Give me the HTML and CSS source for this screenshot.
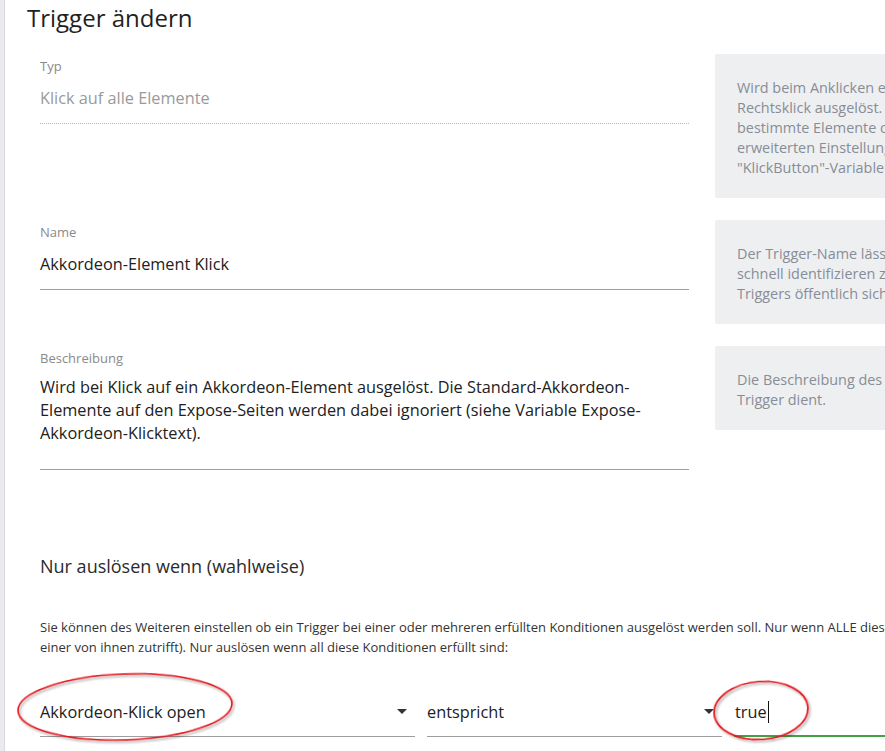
FILE: index.html
```html
<!DOCTYPE html>
<html lang="de">
<head>
<meta charset="utf-8">
<title>Trigger ändern</title>
<link rel="stylesheet" href="styles.css">
</head>
<body>
<div class="app">
  <aside class="strip"></aside>
  <main class="page">
    <h1 class="title">Trigger ändern</h1>
    <div class="form-grid">
      <div class="field">
        <div class="label">Typ</div>
        <div class="value value-disabled">Klick auf alle Elemente</div>
      </div>
      <div class="hint">Wird beim Anklicken eines beliebigen Elements mit der linken Maustaste oder per<br>Rechtsklick ausgelöst. Auf Wunsch kann der Trigger auf<br>bestimmte Elemente oder Klickarten beschränkt werden (siehe<br>erweiterten Einstellungen). Die gedrückte Taste steht in der<br>"KlickButton"-Variable zur Verfügung.</div>

      <div class="field">
        <div class="label">Name</div>
        <div class="value">Akkordeon-Element Klick</div>
      </div>
      <div class="hint">Der Trigger-Name lässt sich frei wählen, um den Trigger<br>schnell identifizieren zu können. Er ist für Besucher des<br>Triggers öffentlich sichtbar.</div>

      <div class="field">
        <div class="label">Beschreibung</div>
        <div class="value value-desc">Wird bei Klick auf ein Akkordeon-Element ausgelöst. Die Standard-Akkordeon-<br>Elemente auf den Expose-Seiten werden dabei ignoriert (siehe Variable Expose-<br>Akkordeon-Klicktext).</div>
      </div>
      <div class="hint">Die Beschreibung des Triggers erklärt, wofür dieser<br>Trigger dient.</div>
    </div>

    <section class="conditions">
      <h2 class="cond-title">Nur auslösen wenn (wahlweise)</h2>
      <p class="cond-text">Sie können des Weiteren einstellen ob ein Trigger bei einer oder mehreren erfüllten Konditionen ausgelöst werden soll. Nur wenn ALLE diese Konditionen zutreffen (oder wenn mindestens<br>einer von ihnen zutrifft). Nur auslösen wenn all diese Konditionen erfüllt sind:</p>
      <div class="cond-row">
        <div class="select select-var"><span class="select-text">Akkordeon-Klick open</span><span class="arrow"></span></div>
        <div class="select select-op"><span class="select-text">entspricht</span><span class="arrow"></span></div>
        <div class="text-input"><span class="input-text">true</span><span class="caret"></span></div>
      </div>
    </section>
  </main>

  <svg class="annotations" width="885" height="751" viewBox="0 0 885 751" aria-hidden="true">
    <defs>
      <filter id="shade" x="-10%" y="-20%" width="120%" height="140%">
        <feDropShadow dx="1.5" dy="2" stdDeviation="1.3" flood-color="#000" flood-opacity="0.35"/>
      </filter>
    </defs>
    <ellipse cx="125" cy="707" rx="107" ry="33" transform="rotate(-2 125 707)" fill="none" stroke="#e3141b" stroke-width="1.6" filter="url(#shade)"/>
    <ellipse cx="761" cy="710.5" rx="47" ry="29" transform="rotate(-4 761 710.5)" fill="none" stroke="#e3141b" stroke-width="1.6" filter="url(#shade)"/>
  </svg>
</div>
</body>
</html>
```

FILE: styles.css
```css
html, body {
  margin: 0;
  padding: 0;
  overflow: hidden;
  background: #ffffff;
}

body {
  width: 885px;
  height: 751px;
  font-family: "Open Sans", "Noto Sans", "Liberation Sans", sans-serif;
  color: #212121;
}

.app {
  position: relative;
  display: flex;
  height: 751px;
}

.strip {
  flex: none;
  width: 4px;
  background: #ebebed;
  border-right: 1px solid #d9dadd;
}

.page {
  flex: none;
  padding-left: 22px;
}

.title {
  margin: 0;
  font-size: 24px;
  font-weight: 400;
  line-height: 36px;
  color: #1f1f1f;
}

.form-grid {
  display: grid;
  grid-template-columns: 649px 320px;
  column-gap: 26px;
  row-gap: 22px;
  align-items: start;
  margin: 18px 0 0 13px;
}

.field {
  padding-top: 4px;
}

.label {
  font-size: 13px;
  line-height: 16px;
  color: #8a8a8a;
}

.value {
  margin-top: 12px;
  padding-bottom: 13px;
  font-size: 16.3px;
  line-height: 24px;
  color: #212121;
  border-bottom: 1px solid #9e9e9e;
  white-space: nowrap;
}

.value-disabled {
  color: #9a9a9a;
  border-bottom: 1px dotted #b5b5b5;
}

.value-desc {
  margin-top: 10px;
  padding-bottom: 24px;
  line-height: 23px;
}

.hint {
  padding: 24px 22px 20px;
  background: #eeeff1;
  border-radius: 2px;
  font-size: 14.4px;
  line-height: 20px;
  color: #868d97;
  white-space: nowrap;
  overflow: hidden;
}

.conditions {
  margin-left: 13px;
}

.cond-title {
  margin: 83px 0 0;
  font-size: 18px;
  font-weight: 400;
  line-height: 26px;
  color: #2b2b2b;
}

.cond-text {
  margin: 38px 0 0;
  font-size: 13px;
  line-height: 20px;
  color: #333333;
  white-space: nowrap;
}

.cond-row {
  display: grid;
  grid-template-columns: 375px 295px 200px;
  column-gap: 12px;
  margin-top: 42px;
}

.select {
  display: flex;
  align-items: center;
  justify-content: space-between;
  padding: 0 8px 12px 0;
  border-bottom: 1px solid #9e9e9e;
}

.select-text,
.input-text {
  font-size: 16.3px;
  line-height: 24px;
  color: #212121;
}

.arrow {
  width: 0;
  height: 0;
  border-left: 5px solid transparent;
  border-right: 5px solid transparent;
  border-top: 5px solid #333333;
}

.text-input {
  display: flex;
  align-items: center;
  padding: 1px 0 11px 1px;
  border-bottom: 2px solid #43a047;
}

.caret {
  width: 1px;
  height: 22px;
  margin-left: 1px;
  background: #111111;
}

.annotations {
  position: absolute;
  top: 0;
  left: 0;
  pointer-events: none;
}
```
